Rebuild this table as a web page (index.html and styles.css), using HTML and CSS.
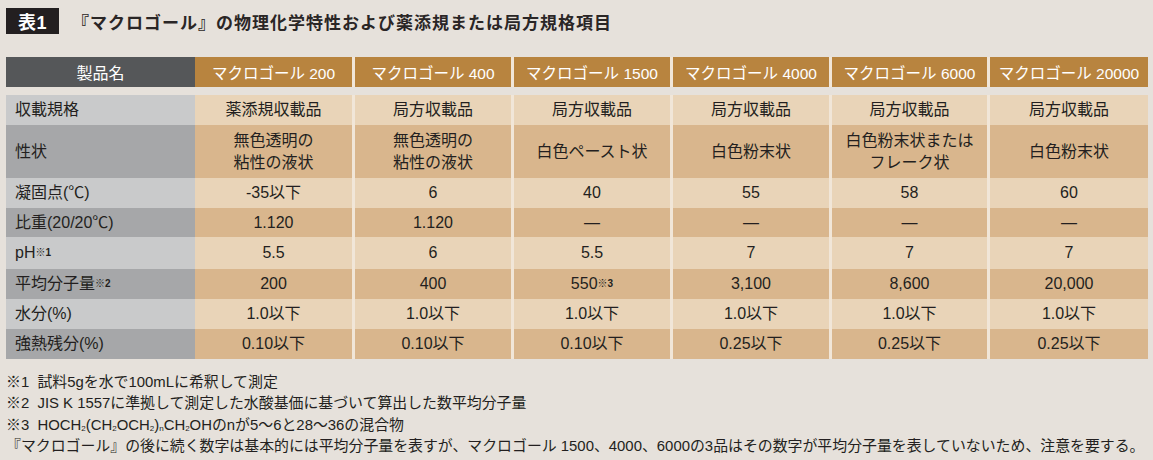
FILE: index.html
```html
<!DOCTYPE html>
<html lang="ja">
<head>
<meta charset="utf-8">
<link rel="stylesheet" href="styles.css">
</head>
<body>
<div class="page">
  <div class="title">
    <span class="badge">表1</span>
    <h1 class="heading">『マクロゴール』の物理化学特性および薬添規または局方規格項目</h1>
  </div>
  <div class="grid head">
    <div class="hd lab">製品名</div>
    <div class="hd">マクロゴール 200</div>
    <div class="hd sep">マクロゴール 400</div>
    <div class="hd sep">マクロゴール 1500</div>
    <div class="hd sep">マクロゴール 4000</div>
    <div class="hd sep">マクロゴール 6000</div>
    <div class="hd sep">マクロゴール 20000</div>
  </div>
  <div class="grid body">
    <div class="c lab lt">収載規格</div>
    <div class="c lt">薬添規収載品</div>
    <div class="c lt sep">局方収載品</div>
    <div class="c lt sep">局方収載品</div>
    <div class="c lt sep">局方収載品</div>
    <div class="c lt sep">局方収載品</div>
    <div class="c lt sep">局方収載品</div>

    <div class="c lab dk">性状</div>
    <div class="c dk">無色透明の<br>粘性の液状</div>
    <div class="c dk sep">無色透明の<br>粘性の液状</div>
    <div class="c dk sep">白色ペースト状</div>
    <div class="c dk sep">白色粉末状</div>
    <div class="c dk sep">白色粉末状または<br>フレーク状</div>
    <div class="c dk sep">白色粉末状</div>

    <div class="c lab lt">凝固点(℃)</div>
    <div class="c lt">-35以下</div>
    <div class="c lt sep">6</div>
    <div class="c lt sep">40</div>
    <div class="c lt sep">55</div>
    <div class="c lt sep">58</div>
    <div class="c lt sep">60</div>

    <div class="c lab dk">比重(20/20℃)</div>
    <div class="c dk">1.120</div>
    <div class="c dk sep">1.120</div>
    <div class="c dk sep">—</div>
    <div class="c dk sep">—</div>
    <div class="c dk sep">—</div>
    <div class="c dk sep">—</div>

    <div class="c lab lt">pH<sup>※1</sup></div>
    <div class="c lt">5.5</div>
    <div class="c lt sep">6</div>
    <div class="c lt sep">5.5</div>
    <div class="c lt sep">7</div>
    <div class="c lt sep">7</div>
    <div class="c lt sep">7</div>

    <div class="c lab dk">平均分子量<sup>※2</sup></div>
    <div class="c dk">200</div>
    <div class="c dk sep">400</div>
    <div class="c dk sep">550<sup>※3</sup></div>
    <div class="c dk sep">3,100</div>
    <div class="c dk sep">8,600</div>
    <div class="c dk sep">20,000</div>

    <div class="c lab lt">水分(%)</div>
    <div class="c lt">1.0以下</div>
    <div class="c lt sep">1.0以下</div>
    <div class="c lt sep">1.0以下</div>
    <div class="c lt sep">1.0以下</div>
    <div class="c lt sep">1.0以下</div>
    <div class="c lt sep">1.0以下</div>

    <div class="c lab dk">強熱残分(%)</div>
    <div class="c dk">0.10以下</div>
    <div class="c dk sep">0.10以下</div>
    <div class="c dk sep">0.10以下</div>
    <div class="c dk sep">0.25以下</div>
    <div class="c dk sep">0.25以下</div>
    <div class="c dk sep">0.25以下</div>
  </div>
  <div class="notes">
    <p>※1&nbsp;&nbsp;試料5gを水で100mLに希釈して測定</p>
    <p>※2&nbsp;&nbsp;JIS K 1557に準拠して測定した水酸基価に基づいて算出した数平均分子量</p>
    <p>※3&nbsp;&nbsp;HOCH<sub>2</sub>(CH<sub>2</sub>OCH<sub>2</sub>)<sub>n</sub>CH<sub>2</sub>OHのnが5～6と28～36の混合物</p>
    <p>『マクロゴール』の後に続く数字は基本的には平均分子量を表すが、マクロゴール 1500、4000、6000の3品はその数字が平均分子量を表していないため、注意を要する。</p>
  </div>
</div>
</body>
</html>
```
FILE: styles.css
```css
html, body {
  margin: 0;
  padding: 0;
  background: #e6e1db;
}
.page {
  width: 1153px;
  height: 460px;
  padding: 8px 0 0 6px;
  box-sizing: border-box;
  font-family: "Liberation Sans", "Noto Sans CJK JP", sans-serif;
  color: #231f20;
}
.title {
  display: flex;
  align-items: center;
  height: 26px;
}
.badge {
  width: 53px;
  height: 26px;
  background: #231f20;
  color: #fff;
  font-weight: bold;
  font-size: 18px;
  display: flex;
  align-items: center;
  justify-content: center;
  letter-spacing: 0.5px;
}
.heading {
  margin: 0 0 0 13px;
  font-size: 17px;
  font-weight: bold;
  letter-spacing: 1px;
  color: #2a2626;
}
.grid {
  display: grid;
  grid-template-columns: 189px 157px 159px 159px 159px 158px 161px;
  width: 1142px;
}
.head {
  margin-top: 23px;
  grid-template-rows: 30px;
}
.body {
  margin-top: 8px;
  grid-template-rows: 30px 53px 30px 29px 32px 30px 30px 30px;
}
.hd {
  background: #b8843f;
  color: #fff;
  font-size: 15.5px;
  display: flex;
  align-items: center;
  justify-content: center;
}
.hd.lab {
  background: #555759;
  font-size: 16px;
}
.c {
  display: flex;
  align-items: center;
  justify-content: center;
  text-align: center;
  font-size: 16px;
  line-height: 22px;
}
.c.lab {
  justify-content: flex-start;
  padding-left: 9px;
  text-align: left;
}
.c.lt { background: #e9d4b8; }
.c.dk { background: #d9b68d; }
.c.lab.lt { background: #c9cacb; }
.c.lab.dk { background: #a6a7a9; }
.sep {
  border-left: 3px solid #f1e6d8;
}
sup {
  font-size: 10px;
  line-height: 0;
  vertical-align: 6px;
  font-weight: bold;
}
.notes {
  margin-top: 13px;
  font-size: 14.9px;
  line-height: 21.3px;
}
.notes p {
  margin: 0;
  white-space: nowrap;
}
sub {
  font-size: 8px;
  line-height: 0;
  vertical-align: -1px;
}
```
